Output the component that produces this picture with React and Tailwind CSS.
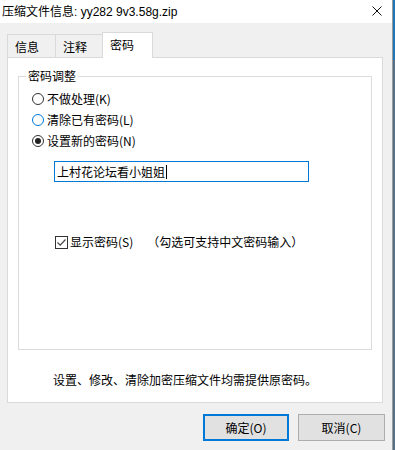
import React from "react";

const F = { fontFamily: '"Noto Sans CJK SC", "Noto Sans", sans-serif' };
const T = { fontFamily: '"Liberation Sans", "Noto Sans CJK SC", sans-serif' };

function Radio({ checked, hover, label }) {
  return (
    <div className="flex h-[21px] items-center">
      <span
        className={
          "flex h-[12px] w-[12px] items-center justify-center rounded-full border bg-white " +
          (hover ? "border-[#0078d7]" : "border-[#333333]")
        }
      >
        {checked && <span className="h-[6px] w-[6px] rounded-full bg-[#222222]" />}
      </span>
      <span className="ml-[3px] text-[12px] leading-[16px] text-black">{label}</span>
    </div>
  );
}

export default function App() {
  return (
    <div className="flex h-[450px] w-[395px] overflow-hidden bg-[#f0f0f0]" style={F}>
      <div className="flex h-full w-[392px] flex-col">
        {/* title bar */}
        <div className="flex h-[23px] items-center justify-between bg-white pl-[2px] pr-[10px]">
          <span className="text-[12px] leading-[16px] text-black" style={T}>压缩文件信息: yy282 9v3.58g.zip</span>
          <svg width="10" height="10" viewBox="0 0 10 10" className="mt-[-2px]">
            <path d="M0.5 0.5 L9.5 9.5 M9.5 0.5 L0.5 9.5" stroke="#111" strokeWidth="1" fill="none" />
          </svg>
        </div>
        {/* body */}
        <div className="flex flex-1 flex-col bg-[#f0f0f0]">
          {/* tabs */}
          <div className="ml-[7px] mt-[9px] flex h-[25px] items-end">
            <div className="flex h-[23px] w-[48px] items-center border-l border-t border-[#d9d9d9] pl-[7px] pt-[2px] text-[12px] text-black">
              信息
            </div>
            <div className="flex h-[23px] w-[47px] items-center border-l border-t border-[#d9d9d9] pl-[7px] pt-[2px] text-[12px] text-black">
              注释
            </div>
            <div className="relative z-10 mb-[-1px] flex h-[26px] w-[51px] items-center border-l border-r border-t border-[#d9d9d9] bg-white pl-[7px] pb-[2px] text-[12px] text-black">
              密码
            </div>
          </div>
          {/* panel */}
          <div className="ml-[7px] flex h-[346px] w-[376px] flex-col border border-[#d9d9d9] bg-white">
            <div className="relative ml-[10px] mt-[18px] flex h-[274px] w-[354px] flex-col border border-[#dcdcdc] pl-[13px] pt-[11px]">
              <span className="absolute left-[7px] top-[-9px] bg-white px-[2px] text-[12px] leading-[16px] text-black">
                密码调整
              </span>
              <Radio label="不做处理(K)" />
              <Radio hover label="清除已有密码(L)" />
              <Radio checked label="设置新的密码(N)" />
              <div className="ml-[22px] mt-[10px] flex h-[21px] w-[255px] items-center border border-[#0078d7] pl-[2px] text-[12px] text-black">
                上村花论坛看小姐姐
                <span className="ml-[1px] h-[14px] w-[1px] bg-black" />
              </div>
              <div className="ml-[23px] mt-[50px] flex h-[20px] items-center">
                <span className="flex h-[13px] w-[13px] items-center justify-center border border-[#333333] bg-white">
                  <svg width="11" height="11" viewBox="0 0 11 11">
                    <path d="M1.5 5.5 L4.2 8.2 L9.5 2.5" stroke="#444" strokeWidth="1.2" fill="none" />
                  </svg>
                </span>
                <span className="ml-[2px] text-[12px] leading-[16px] text-black">显示密码(S)</span>
                <span className="ml-[14px] text-[12px] leading-[16px] text-black">（勾选可支持中文密码输入）</span>
              </div>
            </div>
            <div className="ml-[45px] mt-[22px] text-[12px] leading-[16px] text-black">
              设置、修改、清除加密压缩文件均需提供原密码。
            </div>
          </div>
          {/* buttons */}
          <div className="mt-[11px] flex justify-end gap-[9px] pr-[7px]">
            <div className="flex h-[27px] w-[86px] items-center justify-center border-2 border-[#0078d7] bg-[#e1e1e1] text-[12px] text-black">
              确定(O)
            </div>
            <div className="flex h-[27px] w-[87px] items-center justify-center border border-[#adadad] bg-[#e1e1e1] text-[12px] text-black">
              取消(C)
            </div>
          </div>
        </div>
      </div>
      <div className="flex h-full w-[3px] flex-col border-l border-[#9a9a9a]">
        <div className="h-[60px] bg-[#1f76b8]" />
        <div className="flex-1 bg-[#56708a]" />
      </div>
    </div>
  );
}
